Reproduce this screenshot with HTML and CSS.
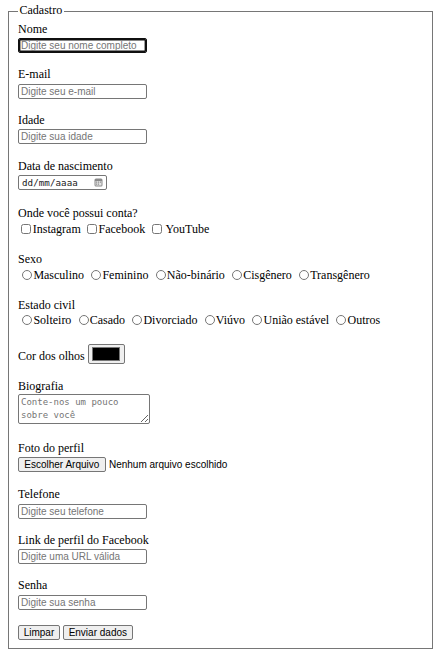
FILE: index.html
```html
<!DOCTYPE html>
<html lang="pt-BR">
<head>
<meta charset="utf-8">
<title>Cadastro</title>
<link rel="stylesheet" href="styles.css">
</head>
<body>
<form class="form">
  <fieldset class="box">
    <legend class="box-title">Cadastro</legend>

    <div class="field">
      <label class="lbl" for="nome">Nome</label>
      <input class="txt txt-focus" id="nome" type="text" placeholder="Digite seu nome completo">
    </div>

    <div class="field">
      <label class="lbl" for="email">E-mail</label>
      <input class="txt" id="email" type="email" placeholder="Digite seu e-mail">
    </div>

    <div class="field">
      <label class="lbl" for="idade">Idade</label>
      <input class="txt" id="idade" type="text" placeholder="Digite sua idade">
    </div>

    <div class="field field-date">
      <label class="lbl" for="nasc">Data de nascimento</label>
      <div class="date" id="nasc">
        <span class="date-text">dd/mm/aaaa</span>
        <svg class="cal" width="9" height="9" viewBox="0 0 9 9" aria-hidden="true">
          <rect x="0.5" y="0.5" width="8" height="8" rx="1.5" fill="#8a8a8a"/>
          <rect x="1.5" y="3" width="6" height="4.5" fill="#e6e6e6"/>
          <rect x="2" y="3.5" width="1.2" height="1.2" fill="#8a8a8a"/>
          <rect x="3.9" y="3.5" width="1.2" height="1.2" fill="#8a8a8a"/>
          <rect x="5.8" y="3.5" width="1.2" height="1.2" fill="#8a8a8a"/>
          <rect x="2" y="5.5" width="1.2" height="1.2" fill="#8a8a8a"/>
          <rect x="3.9" y="5.5" width="1.2" height="1.2" fill="#8a8a8a"/>
        </svg>
      </div>
    </div>

    <div class="field field-opts1">
      <span class="lbl">Onde você possui conta?</span>
      <div class="opts opts-low"><input class="chk" type="checkbox" id="ig"><label for="ig">Instagram</label> <input class="chk" type="checkbox" id="fb"><label for="fb">Facebook</label> <input class="chk" type="checkbox" id="yt"> <label for="yt">YouTube</label></div>
    </div>

    <div class="field field-opts2">
      <span class="lbl">Sexo</span>
      <div class="opts opts-low"><input class="rad" type="radio" name="sexo" id="s1"><label for="s1">Masculino</label> <input class="rad" type="radio" name="sexo" id="s2"><label for="s2">Feminino</label> <input class="rad" type="radio" name="sexo" id="s3"><label for="s3">Não-binário</label> <input class="rad" type="radio" name="sexo" id="s4"><label for="s4">Cisgênero</label> <input class="rad" type="radio" name="sexo" id="s5"><label for="s5">Transgênero</label></div>
    </div>

    <div class="field field-opts3">
      <span class="lbl">Estado civil</span>
      <div class="opts"><input class="rad" type="radio" name="civil" id="e1"><label for="e1">Solteiro</label> <input class="rad" type="radio" name="civil" id="e2"><label for="e2">Casado</label> <input class="rad" type="radio" name="civil" id="e3"><label for="e3">Divorciado</label> <input class="rad" type="radio" name="civil" id="e4"><label for="e4">Viúvo</label> <input class="rad" type="radio" name="civil" id="e5"><label for="e5">União estável</label> <input class="rad" type="radio" name="civil" id="e6"><label for="e6">Outros</label></div>
    </div>

    <div class="color-row">
      <label class="lbl-inline" for="olhos">Cor dos olhos</label>
      <input class="color" type="color" id="olhos" value="#000000">
    </div>

    <div class="field field-bio">
      <label class="lbl" for="bio">Biografia</label>
      <textarea class="bio" id="bio" placeholder="Conte-nos um pouco sobre você"></textarea>
    </div>

    <div class="field field-file">
      <span class="lbl">Foto do perfil</span>
      <div class="file">
        <button type="button" class="btn btn-file">Escolher Arquivo</button>
        <span class="file-name">Nenhum arquivo escolhido</span>
      </div>
    </div>

    <div class="field">
      <label class="lbl" for="tel">Telefone</label>
      <input class="txt" id="tel" type="tel" placeholder="Digite seu telefone">
    </div>

    <div class="field">
      <label class="lbl" for="fbl">Link de perfil do Facebook</label>
      <input class="txt" id="fbl" type="url" placeholder="Digite uma URL válida">
    </div>

    <div class="field field-last">
      <label class="lbl" for="senha">Senha</label>
      <input class="txt" id="senha" type="password" placeholder="Digite sua senha">
    </div>

    <div class="actions"><button type="reset" class="btn">Limpar</button> <button type="submit" class="btn">Enviar dados</button></div>
  </fieldset>
</form>
</body>
</html>
```

FILE: styles.css
```css
* {
  box-sizing: border-box;
}

html, body {
  background: #fff;
}

body {
  margin: 0;
  font-family: "Liberation Serif", "Times New Roman", serif;
  font-size: 12px;
  color: #000;
}

.form {
  padding: 3px 0 0 8px;
}

.box {
  margin: 0;
  width: 425px;
  min-width: 0;
  border: 1px solid #767676;
  padding: 1.8px 9px 8px;
}

.box-title {
  padding: 0 1.5px 2.6px;
  line-height: 14.4px;
}

.field {
  display: flex;
  flex-direction: column;
  align-items: flex-start;
  margin-bottom: 14.2px;
}

.lbl {
  display: block;
  height: 14.4px;
  line-height: 14.4px;
}

.txt {
  margin: 2px 0 0;
  width: 129px;
  height: 15px;
  border: 1px solid #767676;
  border-radius: 2px;
  padding: 0 2px;
  font-family: "Liberation Sans", Arial, sans-serif;
  font-size: 10px;
  color: #000;
  background: #fff;
  outline: none;
}

.txt::placeholder {
  color: #757575;
}

.txt-focus {
  border-color: #101010;
  box-shadow: inset 0 0 0 1.4px #101010;
}

/* date */
.field-date {
  margin-bottom: 15.4px;
}

.date {
  margin-top: 2.4px;
  width: 89px;
  height: 15px;
  border: 1px solid #767676;
  border-radius: 2px;
  padding: 0 3px 0 3px;
  display: flex;
  align-items: center;
  justify-content: space-between;
}

.date-text {
  font-family: "DejaVu Sans Mono", "Liberation Mono", monospace;
  font-size: 9.2px;
  letter-spacing: 0.05px;
  color: #1a1a1a;
}

.cal {
  display: block;
}

/* option rows */
.opts {
  margin-top: 0.3px;
  height: 15px;
  line-height: 15px;
  white-space: nowrap;
}

.opts-low {
  margin-top: 2px;
}

.field-opts1 {
  margin-bottom: 14.6px;
}

.field-opts2 {
  margin-bottom: 14.9px;
}

.field-opts3 {
  margin-bottom: 16.8px;
}

.chk {
  width: 10px;
  height: 10px;
  margin: 0 1.4px 0 3.4px;
  vertical-align: -1px;
}

.rad {
  width: 10px;
  height: 10px;
  margin: 0 1.2px 0 4.2px;
  vertical-align: -1px;
}

/* color */
.color-row {
  display: flex;
  align-items: center;
  gap: 3.3px;
  height: 20px;
  margin-bottom: 14.5px;
}

.lbl-inline {
  line-height: 14.4px;
  padding-top: 4px;
}

.color {
  width: 37px;
  height: 20px;
  margin: 0;
  padding: 0;
  border: 1px solid #767676;
  border-radius: 2px;
  background: #efefef;
  cursor: default;
}

.color::-webkit-color-swatch-wrapper {
  padding: 2px 4px 2px 3px;
}

.color::-webkit-color-swatch {
  border: 1px solid #777;
  border-radius: 0;
}

/* textarea */
.field-bio {
  margin-bottom: 16.2px;
}

.bio {
  margin: 1.1px 0 0;
  width: 132px;
  height: 30px;
  border: 1px solid #767676;
  border-radius: 2px;
  padding: 1px 2px;
  font-family: "DejaVu Sans Mono", "Liberation Mono", monospace;
  font-size: 9px;
  line-height: 12.5px;
  resize: both;
  outline: none;
}

.bio::placeholder {
  color: #757575;
}

/* file */
.field-file {
  margin-bottom: 14.8px;
}

.file {
  margin-top: 2.1px;
  display: flex;
  align-items: center;
  height: 15.3px;
}

.file-name {
  margin-left: 3.3px;
  font-family: "Liberation Sans", Arial, sans-serif;
  font-size: 10px;
}

/* buttons */
.btn {
  height: 14.5px;
  margin: 0;
  padding: 0 4.7px;
  border: 1px solid #767676;
  border-radius: 2px;
  background: #efefef;
  color: #000;
  font-family: "Liberation Sans", Arial, sans-serif;
  font-size: 10px;
  line-height: 12px;
  vertical-align: top;
}

.btn-file {
  height: 15.3px;
  padding: 0 5.3px;
}

.field-last {
  margin-bottom: 15.6px;
}

.actions {
  height: 14.5px;
  line-height: 14.5px;
  white-space: nowrap;
}
```
